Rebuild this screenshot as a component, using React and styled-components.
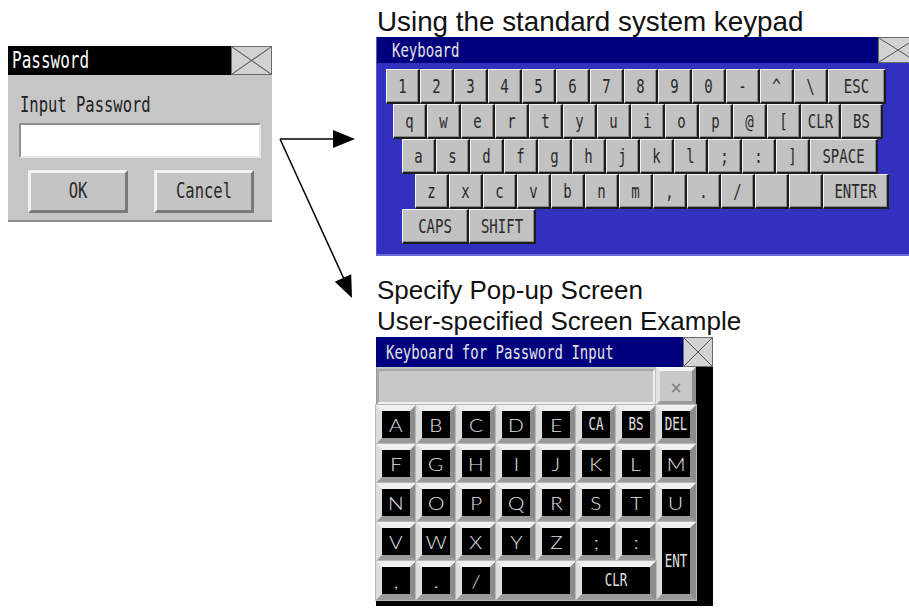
import React from 'react'
import styled, { createGlobalStyle } from 'styled-components'

const GlobalStyle = createGlobalStyle`
  body {
    margin: 0;
    background: #fff;
    font-family: "Liberation Sans", Arial, sans-serif;
  }
`

const Page = styled.div`
  display: flex;
  width: 909px;
  height: 616px;
  overflow: hidden;
  padding-left: 8px;
  box-sizing: border-box;
`

const LeftCol = styled.div`
  flex: none;
  width: 264px;
  padding-top: 46px;
`

const Arrows = styled.svg`
  flex: none;
  display: block;
`

const RightCol = styled.div`
  flex: none;
  width: 545px;
  display: flex;
  flex-direction: column;
`

const Caption = styled.div`
  font-family: "Liberation Sans", Arial, sans-serif;
  font-size: ${p => p.$size}px;
  line-height: ${p => p.$lh}px;
  color: #111;
  margin-top: ${p => p.$top}px;
  margin-left: 1px;
  white-space: nowrap;
`

// tall, narrow bitmap-like text of the panel
const Glyphs = styled.span`
  display: inline-block;
  font-family: "DejaVu Sans Mono", monospace;
  font-size: ${p => p.$size || 15}px;
  line-height: 1;
  transform: scaleY(1.4);
  white-space: pre;
`

const Wide = styled.span`
  display: inline-block;
  font-family: Lato, Inter, "DejaVu Sans", sans-serif;
  font-weight: 300;
  font-size: 18px;
  line-height: 1;
  transform: scaleX(1.15);
`

/* ---------- password dialog ---------- */

const Dialog = styled.div`
  width: 264px;
  background: #c6c6c6;
  border-bottom: 2px solid #8c8c8c;
  padding-bottom: 7px;
`

const TitleBar = styled.div`
  display: flex;
  align-items: center;
  height: ${p => p.$h}px;
  background: ${p => p.$bg};
  color: ${p => p.$fg};
  padding-left: ${p => p.$pad}px;
`

const CloseBox = styled.div`
  margin-left: auto;
  flex: none;
  width: ${p => p.$w}px;
  height: 100%;
  box-sizing: border-box;
  background: #d2d2d2;
  border: 1px solid #6c6c6c;

  svg {
    display: block;
    width: 100%;
    height: 100%;
  }
`

const FieldLabel = styled.div`
  margin: 20px 0 0 12px;
  height: 22px;
  display: flex;
  align-items: center;
  color: #222;
`

const PassInput = styled.div`
  margin: 6px 11px 0 11px;
  height: 35px;
  box-sizing: border-box;
  background: #fff;
  border: 2px solid;
  border-color: #8e8e8e #e6e6e6 #e6e6e6 #8e8e8e;
`

const ButtonRow = styled.div`
  display: flex;
  gap: 26px;
  margin: 12px 0 0 20px;
`

const DlgButton = styled.div`
  width: 100px;
  height: 43px;
  box-sizing: border-box;
  background: #c4c4c4;
  border: 3px solid;
  border-color: #f2f2f2 #7a7a7a #7a7a7a #f2f2f2;
  display: flex;
  align-items: center;
  justify-content: center;
  color: #2a2a2a;
`

/* ---------- system keyboard ---------- */

const KbPanel = styled.div`
  width: 541px;
  background: #3131bd;
  border-left: 1px solid #5a5ad0;
  border-bottom: 2px solid #6b6bd8;
  padding-bottom: 10px;
`

const KbBody = styled.div`
  padding-top: 6px;
  display: flex;
  flex-direction: column;
`

const KeyRow = styled.div`
  display: flex;
  height: 35px;
  margin-left: ${p => p.$indent}px;
`

const Key = styled.div`
  flex: none;
  width: ${p => p.$w}px;
  box-sizing: border-box;
  background: #c2c2c2;
  border-top: 1px solid #f4f4f4;
  border-left: 1px solid #f4f4f4;
  border-right: 2px solid #1c1c1c;
  border-bottom: 2px solid #1c1c1c;
  box-shadow: inset -1px -1px 0 #8a8a8a;
  display: flex;
  align-items: center;
  justify-content: center;
  color: #2a2a2a;
`

/* ---------- user pop-up ---------- */

const Popup = styled.div`
  width: 337px;
  background: #000;
  padding-bottom: 6px;
`

const PopPad = styled.div`
  width: 320px;
  background: #c4c4c4;
  border-left: 1px solid #9a9a9a;
  box-sizing: border-box;
`

const InputRow = styled.div`
  display: flex;
  height: 38px;
`

const PopField = styled.div`
  flex: 1;
  margin: 2px 1px 1px 0;
  background: #c8c8c8;
  border: 2px solid;
  border-color: #a8a8a8 #f0f0f0 #f0f0f0 #a8a8a8;
`

const XKey = styled.div`
  flex: none;
  width: 40px;
  box-sizing: border-box;
  background: #c8c8c8;
  border: 4px solid;
  border-color: #f4f4f4 #8e8e8e #9a9a9a #e2e2e2;
  display: flex;
  align-items: center;
  justify-content: center;
  color: #777;
  font-family: "DejaVu Sans", sans-serif;
  font-size: 15px;
  padding-top: 3px;
`

const PadGrid = styled.div`
  display: grid;
  grid-template-columns: repeat(8, 40px);
  grid-auto-rows: 39px;
  margin-left: -1px;
`

const PadKey = styled.div`
  grid-column: span ${p => p.$cols || 1};
  grid-row: span ${p => p.$rows || 1};
  box-sizing: border-box;
  background: #000;
  border: 6px solid;
  border-color: #f0f0f0 #8c8c8c #9a9a9a #dcdcdc;
  box-shadow: 0 0 0 1px #b8b8b8;
  display: flex;
  align-items: center;
  justify-content: center;
  color: #e2e2e2;
  overflow: hidden;
`

const rows = [
  { indent: 9, keys: ['1', '2', '3', '4', '5', '6', '7', '8', '9', '0', '-', '^', '\\', ['ESC', 58]] },
  { indent: 16, keys: ['q', 'w', 'e', 'r', 't', 'y', 'u', 'i', 'o', 'p', '@', '[', ['CLR', 40], ['BS', 42]] },
  { indent: 25, keys: ['a', 's', 'd', 'f', 'g', 'h', 'j', 'k', 'l', ';', ':', ']', ['SPACE', 68]] },
  { indent: 38, keys: ['z', 'x', 'c', 'v', 'b', 'n', 'm', ',', '.', '/', '', '', ['ENTER', 66]] },
  { indent: 25, keys: [['CAPS', 67], ['SHIFT', 67]] },
]

const pad = [
  ['A'], ['B'], ['C'], ['D'], ['E'], ['CA', 1, 1, true], ['BS', 1, 1, true], ['DEL', 1, 1, true],
  ['F'], ['G'], ['H'], ['I'], ['J'], ['K'], ['L'], ['M'],
  ['N'], ['O'], ['P'], ['Q'], ['R'], ['S'], ['T'], ['U'],
  ['V'], ['W'], ['X'], ['Y'], ['Z'], [';'], [':'], ['ENT', 1, 2, true],
  [','], ['.'], ['/'], ['', 2], ['CLR', 2, 1, true],
]

function Close({ w }) {
  return (
    <CloseBox $w={w}>
      <svg viewBox="0 0 40 30" preserveAspectRatio="none">
        <path d="M0 0L40 30M40 0L0 30" stroke="#555" strokeWidth="1" vectorEffect="non-scaling-stroke" fill="none" />
      </svg>
    </CloseBox>
  )
}

export default function App() {
  return (
    <Page>
      <GlobalStyle />
      <LeftCol>
        <Dialog>
          <TitleBar $h={29} $bg="#000" $fg="#fff" $pad={4}>
            <Glyphs $size={16}>Password</Glyphs>
            <Close w={41} />
          </TitleBar>
          <FieldLabel>
            <Glyphs $size={15.5}>Input Password</Glyphs>
          </FieldLabel>
          <PassInput />
          <ButtonRow>
            <DlgButton><Glyphs $size={15.5}>OK</Glyphs></DlgButton>
            <DlgButton><Glyphs $size={15.5}>Cancel</Glyphs></DlgButton>
          </ButtonRow>
        </Dialog>
      </LeftCol>

      <Arrows width="104" height="310" viewBox="272 0 104 310">
        <g stroke="#000" strokeWidth="1.5" fill="none">
          <line x1="280" y1="139" x2="336" y2="139" />
          <line x1="280" y1="139" x2="344" y2="279" />
        </g>
        <polygon points="355,139 333,130 333,148" fill="#000" />
        <polygon points="352,298 334.8,281.7 351.2,274.3" fill="#000" />
      </Arrows>

      <RightCol>
        <Caption $size={27.8} $lh={30} $top={7}>Using the standard system keypad</Caption>
        <KbPanel>
          <TitleBar $h={26} $bg="#00007f" $fg="#e4e4e4" $pad={15}>
            <Glyphs $size={14}>Keyboard</Glyphs>
            <Close w={40} />
          </TitleBar>
          <KbBody>
            {rows.map((row, i) => (
              <KeyRow key={i} $indent={row.indent}>
                {row.keys.map((k, j) => {
                  const [label, w] = Array.isArray(k) ? k : [k, 34]
                  return (
                    <Key key={j} $w={w}>
                      <Glyphs $size={14}>{label}</Glyphs>
                    </Key>
                  )
                })}
              </KeyRow>
            ))}
          </KbBody>
        </KbPanel>

        <Caption $size={26} $lh={31} $top={19}>
          Specify Pop-up Screen
          <br />
          User-specified Screen Example
        </Caption>
        <Popup>
          <TitleBar $h={30} $bg="#00007f" $fg="#e4e4e4" $pad={10}>
            <Glyphs $size={14}>Keyboard for Password Input</Glyphs>
            <Close w={30} />
          </TitleBar>
          <PopPad>
            <InputRow>
              <PopField />
              <XKey>×</XKey>
            </InputRow>
            <PadGrid>
              {pad.map(([label, cols, rowsSpan, narrow], i) => (
                <PadKey key={i} $cols={cols} $rows={rowsSpan}>
                  {narrow ? <Glyphs $size={12.5}>{label}</Glyphs> : <Wide>{label}</Wide>}
                </PadKey>
              ))}
            </PadGrid>
          </PopPad>
        </Popup>
      </RightCol>
    </Page>
  )
}
